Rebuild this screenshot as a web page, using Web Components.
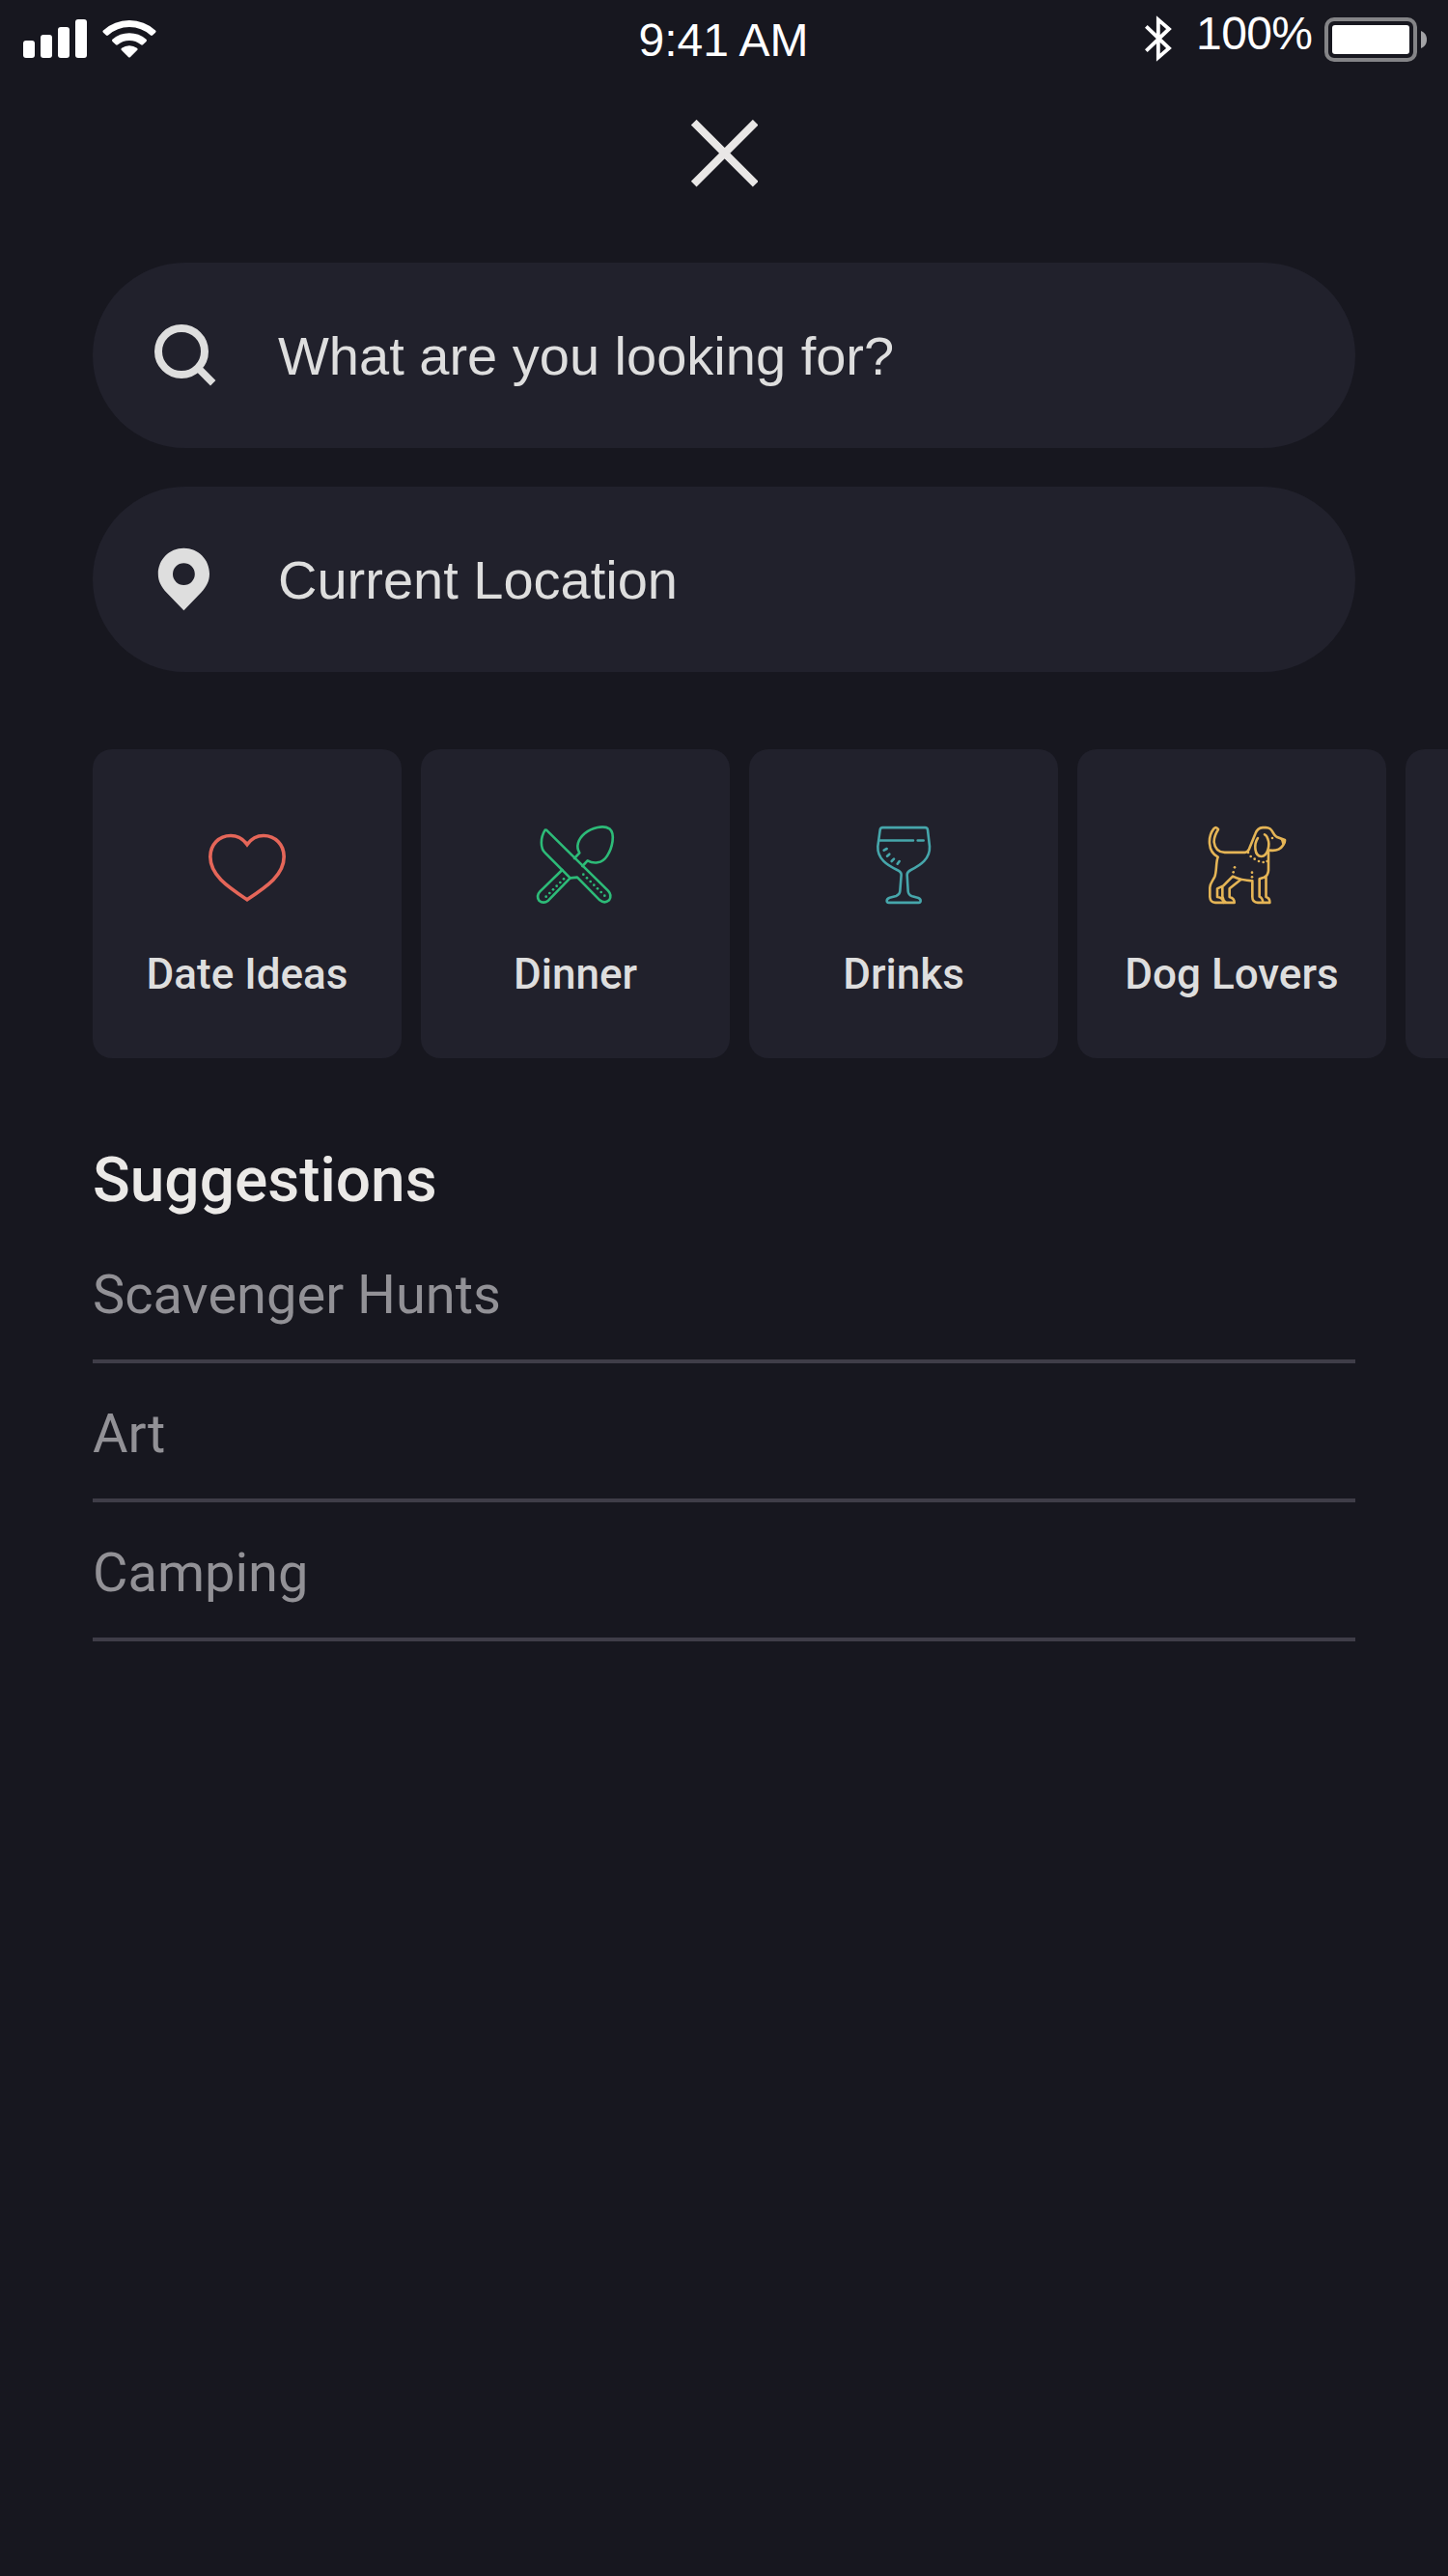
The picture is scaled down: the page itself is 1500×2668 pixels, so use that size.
<!DOCTYPE html>
<html lang="en">
<head>
<meta charset="utf-8">
<title>Search</title>
<style>
  html, body { margin: 0; background: #17171f; }
  body { width: 1500px; height: 2668px; overflow: hidden; }
</style>
</head>
<body>
<search-screen></search-screen>
<script>
const define = (name, html) => {
  const tpl = document.createElement('template');
  tpl.innerHTML = html;
  customElements.define(name, class extends HTMLElement {
    constructor() {
      super();
      this.attachShadow({ mode: 'open' }).append(tpl.content.cloneNode(true));
    }
  });
};

define('status-bar', `
<style>
  :host { display: grid; grid-template-columns: 1fr auto 1fr; align-items: start; height: 80px; box-sizing: border-box;
    padding: 0 22px 0 24px; color: #fff; font: 48px/53px "Liberation Sans", Arial, sans-serif; }
  svg { display: block; flex: none; }
  .left { display: flex; gap: 16px; padding-top: 20px; }
  .time { padding-top: 15px; margin-left: -3px; }
  .right { display: flex; justify-content: flex-end; align-items: flex-start; }
  .bt { margin: 16px 25px 0 0; }
  .pct { margin: 8px 12.600px 0 0; letter-spacing: -0.6px; }
  .bat { margin-top: 18px; }
</style>
<div class="left">
  <svg width="66" height="40" fill="#fff"><rect y="22" width="12" height="18" rx="3"/><rect x="18" y="16" width="12" height="24" rx="3"/><rect x="36" y="8" width="12" height="32" rx="3"/><rect x="54" width="12" height="40" rx="3"/></svg>
  <svg width="56" height="40" viewBox="0 0 56 40">
    <g fill="#fff" stroke="#fff" stroke-width="3" stroke-linejoin="round">
      <path d="M2 12.6A38.5 38.5 0 0 1 54 12.6L51 15.5A34 34 0 0 0 5 15.5Z"/>
      <path d="M11.5 21.8A25.5 25.5 0 0 1 44.5 21.8L41 25.2A20 20 0 0 0 15 25.2Z"/>
      <path d="M21 31A12 12 0 0 1 35 31L28 38Z"/>
    </g>
  </svg>
</div>
<div class="time">9:41 AM</div>
<div class="right">
  <svg class="bt" width="28" height="48" viewBox="78 48 84 144" fill="none" stroke="#fff" stroke-width="11.500"><path d="M82 82L153 150L119.500 179V61L153 90L82 158"/></svg>
  <div class="pct">100%</div>
  <svg class="bat" width="106" height="46"><rect x="2" y="2" width="92" height="42" rx="8" fill="none" stroke="#848487" stroke-width="4"/><rect x="8" y="8" width="80" height="30" rx="3" fill="#fff"/><path d="M100 14C104 15.500 106 19 106 23S104 30.500 100 32Z" fill="#a3a3a6"/></svg>
</div>`);

define('close-button', `
<style>:host { display: flex; justify-content: center; height: 70px; margin-top: 44px; } svg { display: block; }</style>
<svg width="70" height="70" viewBox="0 0 70 70" stroke="#e9e7e6" stroke-width="8"><path d="M3.700 2.700L67.700 66.700M67.700 2.700L3.700 66.700"/></svg>`);

define('search-field', `
<style>
  :host { display: flex; align-items: center; height: 192px; border-radius: 96px; background: #21212c; color: #dedede;
    font: 56px/63px "Liberation Sans", Arial, sans-serif; box-sizing: border-box; padding-left: 64px; }
  .icon { width: 64px; height: 66px; margin-right: 64px; flex: none; display: flex; }
</style>
<span class="icon"><slot name="icon"></slot></span><span><slot></slot></span>`);

define('category-card', `
<style>
  :host { display: flex; flex-direction: column; align-items: center; flex: none; width: 320px; height: 320px; box-sizing: border-box;
    padding-top: 80px; gap: 47px; border-radius: 20px; background: #21212c; color: #dedede;
    font: 500 44px/52px Roboto, sans-serif; white-space: nowrap; }
  ::slotted(svg) { display: block; width: 80px; height: 80px; overflow: visible; fill: none; stroke-width: 7.8; stroke-linejoin: round; stroke-linecap: round; }
</style>
<slot name="icon"></slot><span><slot></slot></span>`);

define('suggestion-row', `
<style>:host { display: flex; align-items: center; height: 144px; box-sizing: border-box; padding-top: 6px; border-bottom: 4px solid #3f3d48;
  color: #929196; font: 56px/66px Roboto, sans-serif; }</style>
<slot></slot>`);

define('search-screen', `
<style>
  :host { display: flex; flex-direction: column; width: 1500px; height: 2668px; background: #17171f; overflow: hidden; }
  .fields { display: flex; flex-direction: column; gap: 40px; margin: 78px 96px 0; }
  .cards { display: flex; gap: 20px; margin: 80px 0 0 96px; overflow: hidden; }
  h2 { margin: 89px 96px 8px; color: #ebe9e7; font: 500 64px/75px Roboto, sans-serif; }
  .list { display: flex; flex-direction: column; margin: 0 96px; }
  .dog { margin-left: 32px; }
</style>
<status-bar></status-bar>
<close-button></close-button>
<div class="fields">
  <search-field>
    <svg slot="icon" width="64" height="66" viewBox="160 335 64 66" fill="none" stroke="#dedede"><circle cx="188" cy="364" r="24" stroke-width="8"/><path d="M206 382L220.700 396.700" stroke-width="7.600"/></svg>
    What are you looking for?
  </search-field>
  <search-field>
    <svg slot="icon" width="64" height="66" viewBox="160 567 64 66" fill="#dedede" fill-rule="evenodd"><path d="M190.400 567.700C205.500 567.700 217 579.500 217 594.300C217 602.500 213.500 608 208.500 613.500L190.400 632.300L172.300 613.500C167.300 608 163.800 602.500 163.800 594.300C163.800 579.500 175.300 567.700 190.400 567.700ZM190.400 583.200A11.400 11.400 0 1 0 190.400 606A11.400 11.400 0 1 0 190.400 583.200Z"/></svg>
    Current Location
  </search-field>
</div>
<div class="cards">
  <category-card>
    <svg slot="icon" viewBox="78 48 240 240" stroke="#e56659" style="stroke-width:11;stroke-linejoin:miter"><path d="M198 104C185 86 167 76.500 147 76.500C110 76.500 83.500 105 83.500 142C83.500 198 134 233 198 275.500C262 233 312.500 198 312.500 142C312.500 105 286 76.500 249 76.500C229 76.500 211 86 198 104Z"/></svg>
    Date Ideas
  </category-card>
  <category-card>
    <svg slot="icon" viewBox="48 48 240 240" stroke="#2dbb78">
      <path d="M78 59L270 248Q283 262 273 277Q259 289 244 277L174 206L152 208L75 131C58 115 59 83 74 59"/>
      <path d="M127 183L58 250Q46 263 55 278Q69 290 84 278L152 208M165 147L181 130C169 111 176 88 197 70C219 51 256 43 274 55C293 71 283 114 267 139C251 165 223 164 206 154L190 171"/>
      <g fill="#2dbb78" stroke="none"><circle cx="193" cy="197" r="4"/><circle cx="204" cy="208" r="4"/><circle cx="215" cy="219" r="4"/><circle cx="226" cy="230" r="4"/><circle cx="237" cy="241" r="4"/><circle cx="248" cy="252" r="4"/><circle cx="259" cy="263" r="4"/><circle cx="77" cy="266" r="4"/><circle cx="88" cy="255" r="4"/><circle cx="99" cy="244" r="4"/><circle cx="110" cy="233" r="4"/><circle cx="121" cy="222" r="4"/><circle cx="132" cy="211" r="4"/></g>
    </svg>
    Dinner
  </category-card>
  <category-card>
    <svg slot="icon" viewBox="18 48 240 240" stroke="#46a6ab">
      <path d="M73 51.500H205Q212 51.500 213 59L219 110C221 149 190 169 161 183Q149 189 149 198L152 249Q153 261 165 265L184 270Q191 273 191 279Q191 284.500 185 284.500H92Q86 284.500 86 279Q86 272 95 269L115 264Q126 260 127 249L131 198Q131 189 118 183C88 169 56 149 58 110L65 59Q66 51.500 73 51.500Z"/>
      <path d="M64 91.500H168M182 91.500H200M77 122L86 117M87 140L94 134M101 156L108 149M119 164L125 156"/>
    </svg>
    Drinks
  </category-card>
  <category-card>
    <svg slot="icon" class="dog" viewBox="51 48 240 240" stroke="#e5b556">
      <path d="M97 284.500H72Q56 284 55 267V238C55 224 65 216 70 204C77 186 73 160 80 143C46 125 49 78 67 55Q75 47 81 57C70 75 67 84 68 97C71 120 84 128 101 128.500H164Q172 128 177 118L196 71Q203 52 219 51.500H229C253 52 248 73 262 80L288 90C289 100 284 103 281 108C273 121 260 124 241 122"/>
      <path d="M237 123V184Q236 201 223 206L209 211V266Q219 270 220 284.500H204Q187 284 187 267V217C165 216 147 213 126 203L97 232L78 241V267Q97 269 97 284.500H131Q132 272 116 267V241L151 213M94 235V265Q96 279 106 284.500M220 284.500H241Q242 271 229.500 267V204"/>
      <path d="M204 84C191 103 193 140 215 141C236 140 242 103 235 87Q232 76 225 73"/>
      <g fill="#e5b556" stroke="none"><path d="M273 84L291 89L283 105Q278 103 277 94Z"/><circle cx="249" cy="84" r="4"/><circle cx="174" cy="129" r="4"/><circle cx="182" cy="141" r="4"/><circle cx="194" cy="149" r="4"/><circle cx="207" cy="156" r="4"/><circle cx="221" cy="159" r="4"/><circle cx="233" cy="156" r="4"/><circle cx="132" cy="175" r="4"/><circle cx="128" cy="190" r="4"/><circle cx="186" cy="191" r="4"/><circle cx="186" cy="205" r="4"/></g>
    </svg>
    Dog Lovers
  </category-card>
  <category-card></category-card>
</div>
<h2>Suggestions</h2>
<div class="list">
  <suggestion-row>Scavenger Hunts</suggestion-row>
  <suggestion-row>Art</suggestion-row>
  <suggestion-row>Camping</suggestion-row>
</div>`);
</script>
</body>
</html>
